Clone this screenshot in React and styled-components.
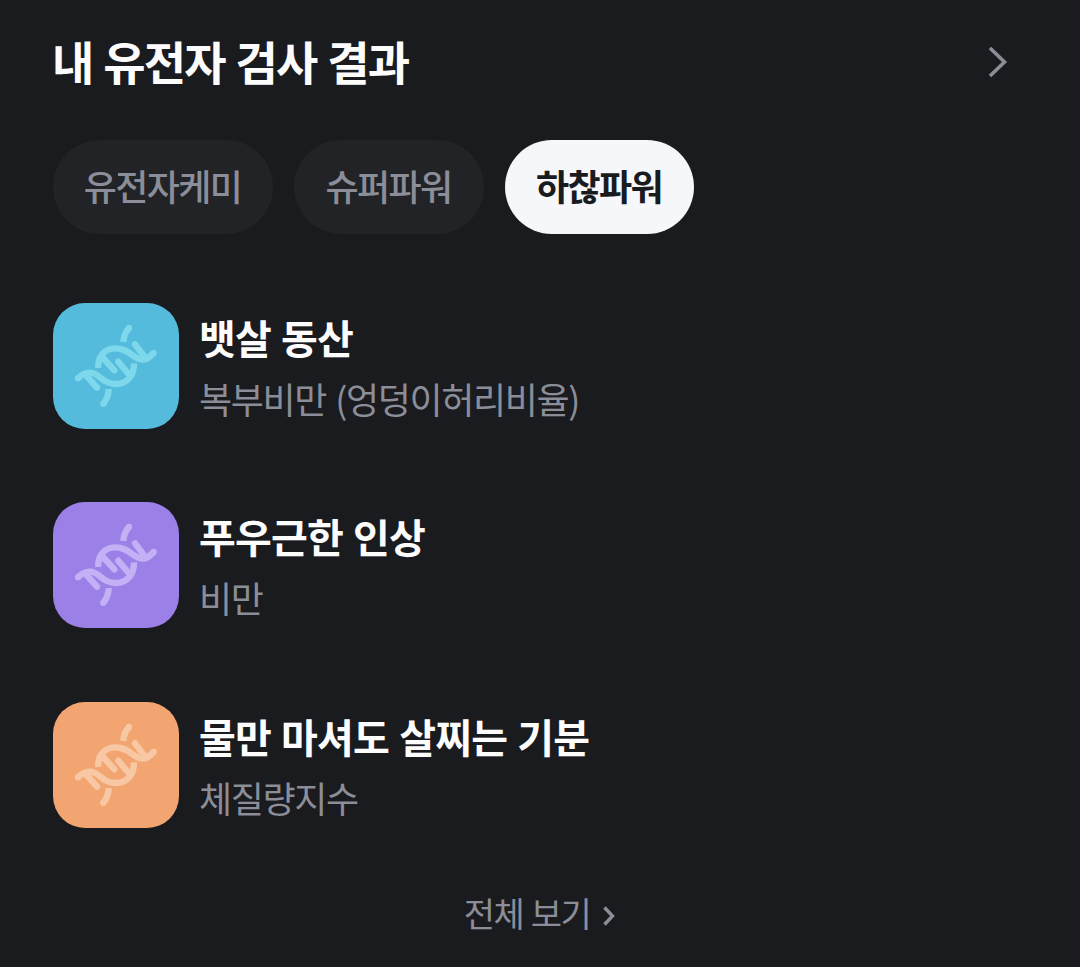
import React from "react";
import styled, { createGlobalStyle } from "styled-components";

const GlobalStyle = createGlobalStyle`
  * {
    box-sizing: border-box;
  }
  body {
    margin: 0;
    background-color: #1a1b1e;
    font-family: "Noto Sans CJK KR", sans-serif;
  }
`;

const CardStyled = styled.section`
  height: 967px;
  padding: 26px 53px 0;
  background-color: #1a1b1e;
  overflow: hidden;
  .header {
    display: flex;
    align-items: center;
    justify-content: space-between;
    height: 68px;
    padding-right: 19px;
    svg {
      margin-top: 3px;
    }
  }
  .title {
    margin: 0 0 0 -1px;
    font-size: 46px;
    line-height: 68px;
    font-weight: 700;
    letter-spacing: -1.8px;
    word-spacing: 2.1px;
    color: #fcfcfd;
  }
`;

const TabList = styled.div`
  display: flex;
  gap: 21px;
  margin-top: 46px;
`;

const Tab = styled.button`
  width: ${(props) => props.$width};
  height: 94px;
  padding: 0 1px 4px 0;
  border: none;
  border-radius: 47px;
  font-family: inherit;
  font-size: 36px;
  line-height: 90px;
  font-weight: ${(props) => (props.$active ? 700 : 500)};
  letter-spacing: -1.6px;
  color: ${(props) => (props.$active ? "#1a1b1e" : "#8b8e98")};
  background-color: ${(props) => (props.$active ? "#f6f7fa" : "#222327")};
`;

const ResultList = styled.ul`
  display: flex;
  flex-direction: column;
  gap: 73.4px;
  margin: 69px 0 0;
  padding: 0;
  list-style: none;
`;

const ResultItem = styled.li`
  display: flex;
  gap: 20px;
  height: 126px;
  .name {
    margin: 4px 0 0;
    font-size: 40px;
    line-height: 60px;
    font-weight: 700;
    letter-spacing: -0.8px;
    word-spacing: 1.8px;
    color: #fcfcfd;
  }
  .trait {
    margin: 4px 0 0;
    font-size: 36px;
    line-height: 54px;
    letter-spacing: -1.4px;
    word-spacing: 2.8px;
    color: #8b8e98;
  }
`;

const Thumb = styled.div`
  flex: none;
  width: 126px;
  height: 126px;
  border-radius: 32px;
  background-color: ${(props) => props.$bg};
  color: ${(props) => props.$fg};
  svg {
    display: block;
  }
`;

const MoreButton = styled.button`
  display: flex;
  align-items: center;
  gap: 13px;
  margin: 58px auto 0;
  padding: 0 1px 0 0;
  border: none;
  background: none;
  font-family: inherit;
  font-size: 34px;
  line-height: 54px;
  letter-spacing: -1.5px;
  word-spacing: 1.5px;
  color: #8b8e98;
  svg {
    margin-top: 6px;
  }
`;

const tabs = [
  { title: "유전자케미", width: "220px" },
  { title: "슈퍼파워", width: "190px" },
  { title: "하찮파워", width: "189px", active: true },
];

const results = [
  {
    name: "뱃살 동산",
    trait: "복부비만 (엉덩이허리비율)",
    bg: "#55bbdc",
    fg: "#7dd8ec",
  },
  { name: "푸우근한 인상", trait: "비만", bg: "#9b80e8", fg: "#c3b0f5" },
  {
    name: "물만 마셔도 살찌는 기분",
    trait: "체질량지수",
    bg: "#f2a571",
    fg: "#f8c8a4",
  },
];

const DnaIcon = () => (
  <svg
    width="126"
    height="126"
    viewBox="21 21 378 378"
    fill="none"
    stroke="currentColor"
    strokeWidth="19"
  >
    <path d="M232 138C233 120 239 107 249 96" />
    <path d="M188 279C188 297 182 311 172 323" />
    <path d="M157 216C154 181 177 157 207 157C252 157 260 191 291 191C304 191 313 182 323 171" />
    <path d="M96 247C107 236 117 230 130 230C163 230 166 264 211 264C243 264 265 238 264 202" />
    <path
      d="M267 145L293 179M171 186L205 223M217 197L246 232M120 238L153 275"
      strokeLinecap="round"
    />
    <g fill="currentColor" stroke="none">
      <circle cx="249" cy="96" r="9.5" />
      <circle cx="172" cy="323" r="9.5" />
      <circle cx="323" cy="171" r="9.5" />
      <circle cx="96" cy="247" r="9.5" />
    </g>
  </svg>
);

const App = () => {
  return (
    <>
      <GlobalStyle />
      <CardStyled>
        <div className="header">
          <h1 className="title">내 유전자 검사 결과</h1>
          <svg width="20" height="32" viewBox="0 0 20 32" fill="none">
            <path d="M2 2L16.5 16L2 30" stroke="#8b8e98" strokeWidth="3.6" />
          </svg>
        </div>
        <TabList>
          {tabs.map((tab) => (
            <Tab
              key={tab.title}
              type="button"
              $width={tab.width}
              $active={tab.active}
            >
              {tab.title}
            </Tab>
          ))}
        </TabList>
        <ResultList>
          {results.map((item) => (
            <ResultItem key={item.name}>
              <Thumb $bg={item.bg} $fg={item.fg}>
                <DnaIcon />
              </Thumb>
              <div>
                <p className="name">{item.name}</p>
                <p className="trait">{item.trait}</p>
              </div>
            </ResultItem>
          ))}
        </ResultList>
        <MoreButton type="button">
          전체 보기
          <svg width="12" height="20" viewBox="0 0 12 20" fill="none">
            <path d="M1.5 1.5L9.5 10L1.5 18.5" stroke="#8b8e98" strokeWidth="3.4" />
          </svg>
        </MoreButton>
      </CardStyled>
    </>
  );
};

export default App;
